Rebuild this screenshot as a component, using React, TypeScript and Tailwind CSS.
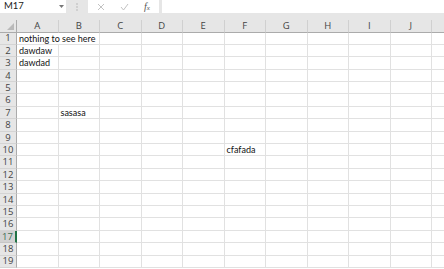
import React from "react";

const cols = ["A", "B", "C", "D", "E", "F", "G", "H", "I", "J", "K"];
const rows = Array.from({ length: 19 }, (_, i) => i + 1);

const data: Record<string, string> = {
  "A1": "nothing to see here",
  "A2": "dawdaw",
  "A3": "dawdad",
  "B7": "sasasa",
  "F10": "cfafada",
};

export default function App() {
  return (
    <div
      className="w-[444px] h-[269px] overflow-hidden bg-white text-[#333]"
      style={{ fontFamily: "Lato, 'Open Sans', sans-serif" }}
    >
      {/* formula bar */}
      <div className="h-[20px] bg-[#e6e6e6] flex items-start">
        <div className="w-[66px] h-[13px] bg-white flex items-center justify-between pl-[4px] pr-[2px] text-[9.5px] text-[#222]">
          <span>M17</span>
          <svg width="5" height="3" viewBox="0 0 5 3">
            <path d="M0 0 L5 0 L2.5 3 Z" fill="#777" />
          </svg>
        </div>
        <div className="w-[22px] h-[13px] flex items-center justify-center">
          <svg width="2" height="8" viewBox="0 0 2 8">
            <circle cx="1" cy="1" r="0.7" fill="#aaa" />
            <circle cx="1" cy="4" r="0.7" fill="#aaa" />
            <circle cx="1" cy="7" r="0.7" fill="#aaa" />
          </svg>
        </div>
        <div className="w-[71px] h-[13px] bg-white flex items-center">
          <div className="w-[20px] flex justify-center ml-[3px]">
            <svg width="8" height="8" viewBox="0 0 8 8">
              <path d="M1 1 L7 7 M7 1 L1 7" stroke="#bbb" strokeWidth="0.9" />
            </svg>
          </div>
          <div className="w-[26px] flex justify-center">
            <svg width="9" height="8" viewBox="0 0 9 8">
              <path d="M1 4 L3.5 7 L8 1" stroke="#bbb" strokeWidth="0.9" fill="none" />
            </svg>
          </div>
          <div className="w-[20px] flex justify-center">
            <span
              className="text-[10px] italic text-[#555] leading-none"
              style={{ fontFamily: "'Liberation Serif', serif" }}
            >
              f<span className="text-[7px]">x</span>
            </span>
          </div>
        </div>
        <div className="w-[3px]" />
        <div className="flex-1 h-[13px] bg-white" />
      </div>

      {/* grid */}
      <div className="grid grid-cols-[17px_repeat(11,41.5px)] grid-rows-[12.5px_repeat(19,12.4px)]">
        {/* corner */}
        <div className="bg-[#e6e6e6] border-r border-b border-[#ababab] relative">
          <svg className="absolute right-[2px] bottom-[2px]" width="7" height="7" viewBox="0 0 7 7">
            <path d="M7 0 L7 7 L0 7 Z" fill="#b9b9b9" />
          </svg>
        </div>
        {cols.map((c) => (
          <div
            key={c}
            className="bg-[#e6e6e6] border-r border-[#d0d0d0] border-b border-b-[#ababab] flex items-center justify-center text-[9.5px] text-[#444] leading-none"
            style={{ fontFamily: "'Open Sans', sans-serif" }}
          >
            {c === "K" ? "" : c}
          </div>
        ))}
        {rows.map((r) => (
          <React.Fragment key={r}>
            {r === 17 ? (
              <div
                className="bg-[#d2d2d2] border-r-2 border-r-[#217346] border-b border-b-[#c6c6c6] flex items-center justify-center text-[9.5px] text-[#3d6e52] leading-none"
                style={{ fontFamily: "'Open Sans', sans-serif" }}
              >
                {r}
              </div>
            ) : (
              <div
                className="bg-[#e6e6e6] border-r border-r-[#ababab] border-b border-b-[#d4d4d4] flex items-center justify-center text-[9.5px] text-[#444] leading-none"
                style={{ fontFamily: "'Open Sans', sans-serif" }}
              >
                {r}
              </div>
            )}
            {cols.map((c) => {
              const key = `${c}${r}`;
              const txt = data[key];
              const hideRight = key === "A1";
              return (
                <div
                  key={key}
                  className={
                    "relative border-b border-[#e1e1e1] " +
                    (hideRight ? "" : "border-r")
                  }
                >
                  {txt && (
                    <span className="absolute left-[2px] top-0 h-full flex items-center whitespace-nowrap text-[9px] text-[#111] leading-none z-10 bg-white pr-[1px]">
                      {txt}
                    </span>
                  )}
                </div>
              );
            })}
          </React.Fragment>
        ))}
      </div>
    </div>
  );
}
